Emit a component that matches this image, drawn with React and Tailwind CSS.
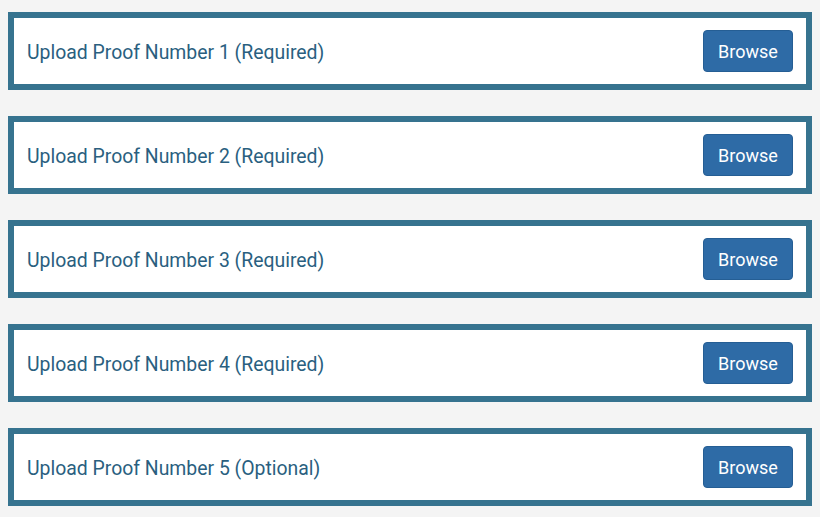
import React from "react";

const proofs = [
  "Upload Proof Number 1 (Required)",
  "Upload Proof Number 2 (Required)",
  "Upload Proof Number 3 (Required)",
  "Upload Proof Number 4 (Required)",
  "Upload Proof Number 5 (Optional)",
];

const ProofRow = ({ label }) => {
  return (
    <div className="flex items-center justify-between h-[78px] border-[6px] border-[#36738f] bg-white pl-[13px] pr-[13px]">
      <span className="mt-[3px] text-[19.4px] text-[#2a5f7f]">{label}</span>
      <button
        type="button"
        className="w-[90px] h-[42px] rounded-[4px] border border-[#255e94] bg-[#2e6ba6] text-[18px] text-white"
      >
        Browse
      </button>
    </div>
  );
};

const App = () => {
  return (
    <div
      className="min-h-screen w-full bg-[#f4f4f4] px-[8px] pt-[12px] flex flex-col gap-[26px]"
      style={{ fontFamily: "Roboto, 'Noto Sans', sans-serif" }}
    >
      {proofs.map((p) => (
        <ProofRow key={p} label={p} />
      ))}
    </div>
  );
};

export default App;
